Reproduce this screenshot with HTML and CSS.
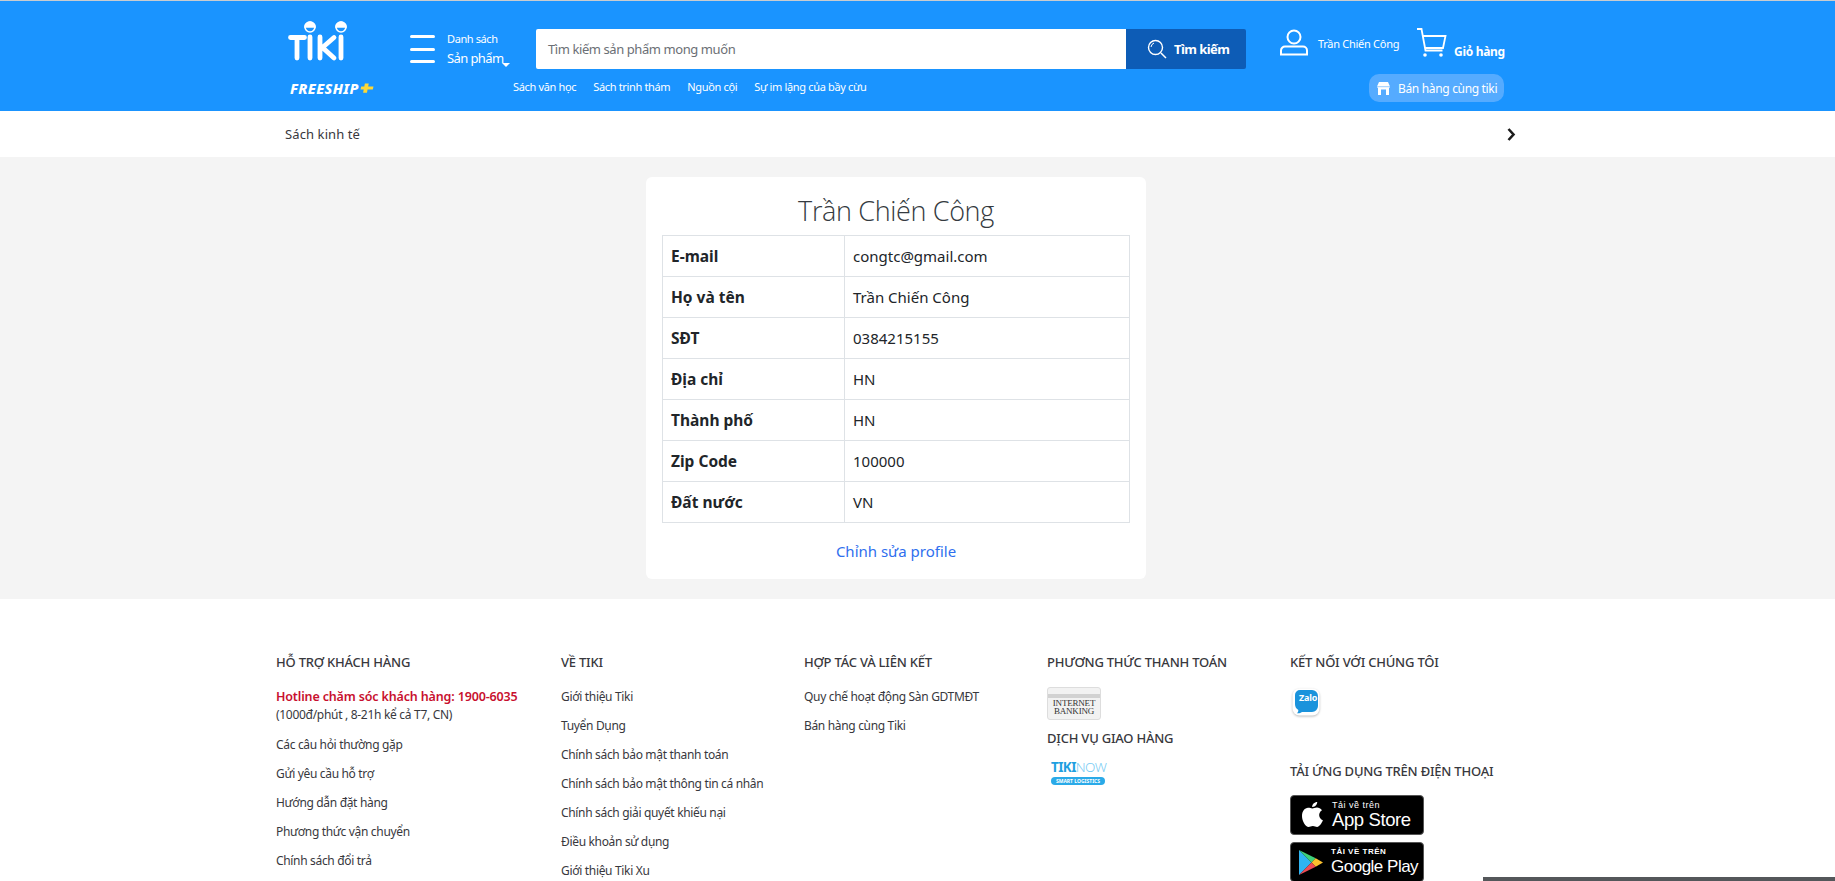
FILE: index.html
```html
<!DOCTYPE html>
<html lang="vi">
<head>
<meta charset="utf-8">
<title>Trần Chiến Công</title>
<link rel="stylesheet" href="styles.css">
</head>
<body>
<header class="header">
  <div class="header-inner">
    <div class="brand">
      <svg class="logo" width="60" height="44" viewBox="0 0 60 44" aria-label="Tiki">
        <g fill="none" stroke="#fff" stroke-width="4.800" stroke-linecap="round">
          <path d="M2.500 19.500H16.500M9 19.500V40"/>
          <path d="M22 19V40"/>
          <path d="M32 19V40M46 19.500L34.500 29.500L46 40"/>
          <path d="M53 19V40"/>
        </g>
        <g fill="#fff" stroke="#fff" stroke-width="1.600">
          <circle cx="22" cy="9" r="5" fill="none"/>
          <path d="M17 9a5 5 0 0 1 10 0z"/>
          <circle cx="53" cy="9" r="5" fill="none"/>
          <path d="M48 9a5 5 0 0 1 10 0z"/>
        </g>
      </svg>
      <div class="freeship">FREESHIP<svg width="14" height="12" viewBox="0 0 13 11"><path d="M4.500 1.300h3.600l-.5 2.700h4.900l-.6 3h-4.900l-.5 3H2.900l.5-3H.5l.6-3h2.900z" fill="#fdd836"/></svg></div>
    </div>
    <div class="menu">
      <div class="burger"><span></span><span></span><span></span></div>
      <div class="menu-text">
        <div class="menu-small">Danh sách</div>
        <div class="menu-big">Sản phẩm<i class="caret"></i></div>
      </div>
    </div>
    <div class="search-col">
      <form class="search">
        <div class="search-input">Tìm kiếm sản phẩm mong muốn</div>
        <div class="search-btn">
          <svg width="24" height="24" viewBox="0 0 24 24" fill="none" stroke="#fff"><circle cx="10.500" cy="10.500" r="7" stroke-width="1.400"/><path d="M6 10a5 5 0 0 1 3-4" stroke-width="1"/><path d="M16 16l5 5" stroke-width="1.500"/></svg>
          <span>Tìm kiếm</span>
        </div>
      </form>
      <nav class="quick">
        <a>Sách văn học</a><a>Sách trinh thám</a><a>Nguồn cội</a><a>Sự im lặng của bầy cừu</a>
      </nav>
    </div>
    <div class="account-col">
      <div class="account">
        <div class="user">
          <svg width="30" height="30" viewBox="0 0 30 30" fill="none" stroke="#fff" stroke-width="2"><circle cx="15" cy="9" r="6.500"/><path d="M6 18.500h18a4 4 0 0 1 4 4v4H2v-4a4 4 0 0 1 4-4z"/></svg>
          <span>Trần Chiến Công</span>
        </div>
        <div class="cart">
          <svg width="32" height="30" viewBox="0 0 32 30" fill="none" stroke="#fff" stroke-width="1.800"><path d="M1 1h4.500l4 21.500h17"/><path d="M6.700 8H29.500l-2.500 12H9"/><circle cx="9" cy="27" r="1.800" fill="#fff" stroke="none"/><circle cx="25" cy="27" r="1.800" fill="#fff" stroke="none"/></svg>
          <span>Giỏ hàng</span>
        </div>
      </div>
      <div class="seller">
        <svg width="13" height="13" viewBox="0 0 13 13"><path d="M2 0h9l2 4.500a2.200 2.200 0 0 1-1 1.700V13H1V6.200a2.200 2.200 0 0 1-1-1.700z" fill="#fff"/><path d="M4 7.500h5V13H4z" fill="#55abff"/><path d="M0 4.700h13" stroke="#55abff" stroke-width=".6"/></svg>
        <span>Bán hàng cùng tiki</span>
      </div>
    </div>
  </div>
</header>

<div class="subnav">
  <div class="subnav-inner">
    <span>Sách kinh tế</span>
    <svg width="10" height="13" viewBox="0 0 10 13" fill="none" stroke="#1c1c1c" stroke-width="2.600"><path d="M1.500 1l5 5.500-5 5.500"/></svg>
  </div>
</div>

<main class="main">
  <section class="card">
    <h1 class="name">Trần Chiến Công</h1>
    <table class="info">
      <tbody>
        <tr><th>E-mail</th><td>congtc@gmail.com</td></tr>
        <tr><th>Họ và tên</th><td>Trần Chiến Công</td></tr>
        <tr><th>SĐT</th><td>0384215155</td></tr>
        <tr><th>Địa chỉ</th><td>HN</td></tr>
        <tr><th>Thành phố</th><td>HN</td></tr>
        <tr><th>Zip Code</th><td>100000</td></tr>
        <tr><th>Đất nước</th><td>VN</td></tr>
      </tbody>
    </table>
    <a class="edit">Chỉnh sửa profile</a>
  </section>
</main>

<footer class="footer">
  <div class="footer-inner">
    <div class="fcol fcol-first">
      <h4>HỖ TRỢ KHÁCH HÀNG</h4>
      <p class="hotline"><b>Hotline chăm sóc khách hàng: 1900-6035</b><br>(1000đ/phút , 8-21h kể cả T7, CN)</p>
      <a>Các câu hỏi thường gặp</a>
      <a>Gửi yêu cầu hỗ trợ</a>
      <a>Hướng dẫn đặt hàng</a>
      <a>Phương thức vận chuyển</a>
      <a>Chính sách đổi trả</a>
    </div>
    <div class="fcol">
      <h4>VỀ TIKI</h4>
      <a>Giới thiệu Tiki</a>
      <a>Tuyển Dụng</a>
      <a>Chính sách bảo mật thanh toán</a>
      <a>Chính sách bảo mật thông tin cá nhân</a>
      <a>Chính sách giải quyết khiếu nại</a>
      <a>Điều khoản sử dụng</a>
      <a>Giới thiệu Tiki Xu</a>
    </div>
    <div class="fcol">
      <h4>HỢP TÁC VÀ LIÊN KẾT</h4>
      <a>Quy chế hoạt động Sàn GDTMĐT</a>
      <a>Bán hàng cùng Tiki</a>
    </div>
    <div class="fcol">
      <h4>PHƯƠNG THỨC THANH TOÁN</h4>
      <div class="bank"><span>INTERNET<br>BANKING</span></div>
      <h4 class="ship">DỊCH VỤ GIAO HÀNG</h4>
      <div class="tikinow"><div class="tn-top"><b>TIKI</b>NOW</div><div class="tn-pill">SMART LOGISTICS</div></div>
    </div>
    <div class="fcol">
      <h4>KẾT NỐI VỚI CHÚNG TÔI</h4>
      <div class="zalo">
        <svg width="28" height="28" viewBox="0 0 28 28"><rect x=".5" y=".5" width="27" height="27" rx="7" fill="#fff"/><path d="M8 2h12a6 6 0 0 1 6 6v10a6 6 0 0 1-6 6H10c-1.500 1.200-3 1.500-5 1.300 1-1 1.400-2 1.300-3.300C4 20.500 3 18.500 3 16V7a5 5 0 0 1 5-5z" fill="#1a93dc"/></svg>
        <span>Zalo</span>
      </div>
      <h4 class="apps">TẢI ỨNG DỤNG TRÊN ĐIỆN THOẠI</h4>
      <div class="badge badge-apple">
        <svg width="22" height="26" viewBox="0 0 22 26"><path fill="#fff" d="M15.200 0c.2 2-1.900 5.200-5 5 -.3-2.400 2.300-5 5-5zM10.300 6.500c1.400 0 2.700-1 4.700-1 1.700 0 3.700.9 5 2.800-4.200 2.500-3.500 8.300.9 10-1.200 3-3.600 6.700-5.800 6.700-1.600 0-2.400-1-4.200-1-1.900 0-2.800 1-4.300 1C3.700 25 0 19.300 0 14 0 9 3 6 6 5.800c1.700-.1 3 .7 4.300.7z"/></svg>
        <div><small>Tải về trên</small><strong>App Store</strong></div>
      </div>
      <div class="badge badge-google">
        <svg width="24" height="27" viewBox="0 0 24 27"><path fill="#2fb4f2" d="M0 1v25l12.500-12.500z"/><path fill="#3ed07a" d="M0 1l12.500 12.500 4.200-4.200z"/><path fill="#fbc02d" d="M16.700 9.300l-4.200 4.200 4.200 4.200 7.300-4.200z"/><path fill="#ee4b55" d="M0 26l16.700-8.300-4.200-4.200z"/></svg>
        <div><small class="caps">TẢI VỀ TRÊN</small><strong>Google Play</strong></div>
      </div>
    </div>
  </div>
</footer>
<div class="corner-bar"></div>
</body>
</html>
```

FILE: styles.css
```css
* { box-sizing: border-box; }
html, body { margin: 0; height: 881px; overflow: hidden; }
body {
  font-family: "Noto Sans", "Open Sans", sans-serif;
  color: #212529;
  background: #fff;
}
a { display: block; text-decoration: none; color: inherit; }

/* header */
.header { height: 111px; background: #1a94ff; border-top: 1px solid #c9ccd0; color: #fff; }
.header-inner { width: 1220px; margin-left: 287px; padding-left: 1px; display: flex; height: 100%; }
.brand { width: 122px; padding-top: 17px; }
.logo { display: block; }
.freeship { margin: 18px 0 0 2px; font: italic 800 14.500px/16px "Noto Sans", sans-serif; letter-spacing: .35px; display: flex; align-items: center; gap: 1px; }
.menu { width: 126px; display: flex; padding-top: 33px; align-items: flex-start; }
.burger { width: 25px; margin-right: 12px; padding-top: 1px; }
.burger span { display: block; height: 3px; background: #fff; border-radius: 2px; margin-bottom: 9.500px; }
.menu-small { font-size: 11px; line-height: 15px; letter-spacing: -.4px; margin-top: -3px; }
.menu-big { font-size: 13px; line-height: 18px; margin-top: 3px; letter-spacing: -.6px; position: relative; }
.caret { position: absolute; left: 55px; bottom: 0; border: 4px solid transparent; border-top-color: #fff; border-bottom: 0; }
.search-col { width: 710px; padding-top: 28px; }
.search { display: flex; height: 40px; border-radius: 2px; overflow: hidden; }
.search-input { flex: 1; background: #fff; color: #6b6f75; font-size: 13px; line-height: 40px; padding-left: 12px; letter-spacing: -.42px; }
.search-btn { width: 120px; background: #0d5cb6; display: flex; align-items: center; padding-left: 19px; gap: 5px; font-size: 13px; font-weight: 700; letter-spacing: -.55px; }
.quick { display: flex; gap: 17px; margin: 10px 0 0 -23px; font-size: 11px; line-height: 16px; letter-spacing: -.34px; }
.account-col { flex: 1; padding-left: 33px; }
.account { display: flex; padding-top: 27px; height: 73px; }
.user { display: flex; width: 138px; align-items: flex-start; gap: 9px; font-size: 11px; line-height: 16px; letter-spacing: -.28px; padding-top: 3px; }
.user svg { flex: none; margin-top: -3px; }
.user span { margin-top: 5px; white-space: nowrap; }
.cart { display: flex; gap: 4px; font-size: 12px; font-weight: 700; letter-spacing: -.3px; white-space: nowrap; margin-top: 1px; margin-left: -1px; }
.cart svg { flex: none; margin-top: -1px; margin-right: 2px; }
.cart span { margin-top: 15px; line-height: 16px; }
.seller { width: 135px; height: 28px; margin-left: 90px; border-radius: 10px; background: #55abff; display: flex; align-items: center; padding-left: 8px; gap: 8px; font-size: 12px; letter-spacing: -.33px; white-space: nowrap; }

/* subnav */
.subnav { height: 46px; background: #fff; }
.subnav-inner { width: 1234px; margin-left: 283px; padding-left: 2px; display: flex; align-items: center; justify-content: space-between; height: 100%; font-size: 13px; letter-spacing: .1px; color: #38383d; }

/* main */
.main { height: 442px; background: #f4f4f4; padding: 20px 0 0 646px; }
.card { width: 500px; height: 402px; background: #fff; border-radius: 6px; padding: 0 16px; text-align: center; }
.name { margin: 0; padding-top: 10px; font-family: "Open Sans", sans-serif; font-size: 27px; font-weight: 300; line-height: 48px; color: #343a40; letter-spacing: -.35px; }
.info { width: 468px; border-collapse: collapse; text-align: left; font-size: 15px; }
.info th, .info td { border: 1px solid #dee2e6; padding: 8px; height: 41px; line-height: 24px; }
.info th { width: 182px; font-weight: 700; font-size: 15.500px; }
.info td { font-weight: 400; }
.edit { margin-top: 16px; font-size: 15px; line-height: 24px; color: #2f6fee; }

/* footer */
.footer { background: #fff; height: 283px; overflow: hidden; }
.footer-inner { padding: 53px 0 0 276px; display: flex; }
.fcol { width: 243px; font-size: 12px; color: #38383d; }
.fcol-first { width: 285px; }
.fcol h4 { margin: 0 0 17px; font-size: 13px; line-height: 20px; font-weight: 500; letter-spacing: -.22px; color: #38383d; white-space: nowrap; }
.fcol a { line-height: 16px; margin-bottom: 13px; letter-spacing: -.33px; white-space: nowrap; }
.hotline { margin: -1px 0 13px; line-height: 18px; letter-spacing: -.3px; white-space: nowrap; }
.hotline b { font-weight: 600; color: #c8102e; font-size: 12.500px; letter-spacing: -.15px; }
.bank { width: 54px; height: 33px; margin-top: -2px; background: linear-gradient(#f2f2f2 6px, #d2d2d2 6px, #d2d2d2 10px, #f2f2f2 10px); border: 1px solid #ddd; border-radius: 3px; font: 9px/8px "Liberation Serif", serif; text-align: center; padding-top: 11px; color: #333; letter-spacing: -.2px; }
.ship { margin-top: 8px !important; margin-bottom: 15px !important; }
.tikinow { width: 54px; margin-left: 4px; margin-top: -4px; }
.tn-top { font-size: 13.500px; line-height: 16px; color: #79ccf4; letter-spacing: -.6px; white-space: nowrap; font-weight: 300; }
.tn-top b { color: #1f9fe0; font-weight: 700; }
.tn-pill { height: 8px; margin-top: 2px; border-radius: 4px; background: #2aaae8; color: #fff; font-size: 5px; line-height: 8px; text-align: center; white-space: nowrap; font-weight: 700; overflow: hidden; }
.zalo { width: 28px; height: 28px; margin: -1px 0 0 2px; position: relative; }
.zalo svg { display: block; filter: drop-shadow(0 1px 1px #bbb); }
.zalo span { position: absolute; left: 7px; top: 4px; color: #fff; font-size: 9px; font-weight: 700; line-height: 12px; letter-spacing: -.2px; }
.apps { margin-top: 45px !important; margin-bottom: 14px !important; }
.badge { width: 134px; height: 40px; background: #000; border-radius: 4px; border: 1px solid #555; color: #fff; display: flex; align-items: center; margin-bottom: 7px; font-family: "Liberation Sans", sans-serif; }
.badge small { display: block; font-size: 9px; line-height: 10px; letter-spacing: .5px; }
.badge strong { display: block; font-weight: 400; font-size: 18.500px; line-height: 20px; letter-spacing: -.4px; white-space: nowrap; }
.badge-apple { padding-left: 11px; gap: 8px; }
.badge-google { padding-left: 8px; gap: 8px; }
.badge-google strong { font-size: 17px; letter-spacing: -.5px; }
.badge .caps { font-size: 8px; font-weight: 700; }

.corner-bar { position: fixed; left: 1483px; right: 0; bottom: 0; height: 4px; background: #54575a; }
```
